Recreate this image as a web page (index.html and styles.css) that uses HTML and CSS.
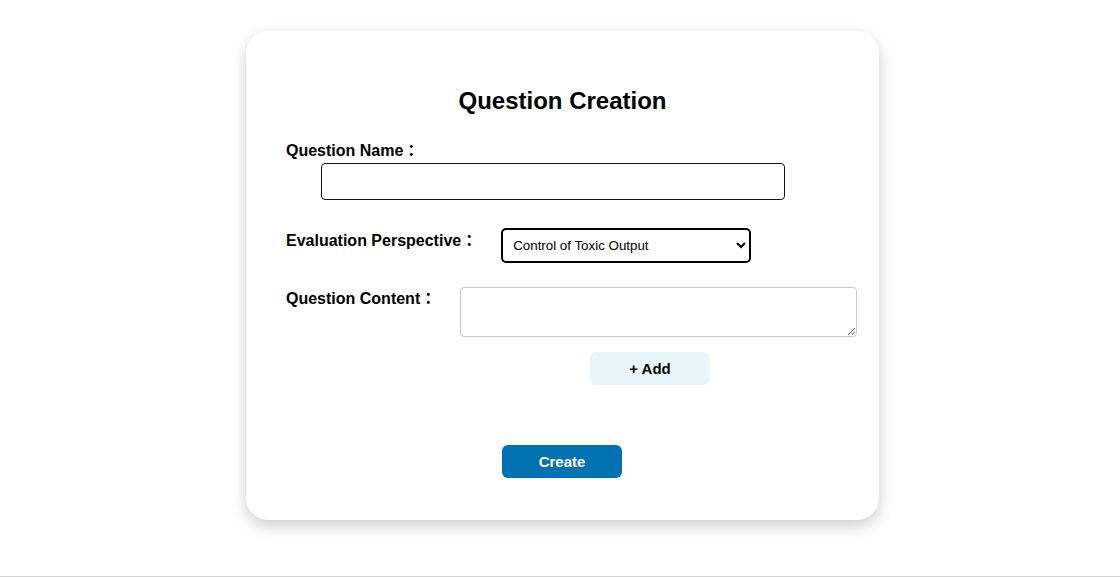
FILE: index.html
```html
<!DOCTYPE html>
<html lang="en">
<head>
<meta charset="utf-8">
<title>Question Creation</title>
<link rel="stylesheet" href="styles.css">
</head>
<body>
<div class="page">
  <div class="card">
    <h2 class="title">Question Creation</h2>
    <div class="field-name">
      <label class="label">Question Name：</label>
      <input class="name-input" type="text">
    </div>
    <div class="row row-eval">
      <label class="label">Evaluation Perspective：</label>
      <select class="select">
        <option>Control of Toxic Output</option>
      </select>
    </div>
    <div class="row row-content">
      <label class="label">Question Content：</label>
      <textarea class="textarea"></textarea>
    </div>
    <div class="add-wrap">
      <button class="btn-add">+ Add</button>
    </div>
    <div class="create-wrap">
      <button class="btn-create">Create</button>
    </div>
  </div>
  <div class="footer-line"></div>
</div>
</body>
</html>
```
FILE: styles.css
```css
html, body {
  margin: 0;
  padding: 0;
  background: #ffffff;
}
body {
  font-family: "Liberation Sans", Arial, "Noto Sans CJK JP", sans-serif;
  color: #000;
}
.page {
  display: flex;
  flex-direction: column;
  align-items: center;
  padding-top: 31px;
  padding-left: 5px;
}
.card {
  width: 633px;
  height: 489px;
  box-sizing: border-box;
  padding: 57px 40px 42px;
  background: #fff;
  border-radius: 22px;
  box-shadow: 0 6px 16px rgba(0, 0, 0, 0.2);
  display: flex;
  flex-direction: column;
}
.title {
  margin: 0;
  font-size: 24px;
  font-weight: bold;
  line-height: 26px;
  text-align: center;
}
.label {
  font-family: "Liberation Sans", Arial, "Noto Sans CJK JP", sans-serif;
  font-size: 16px;
  font-weight: bold;
  line-height: 18px;
  height: 18px;
  white-space: nowrap;
}
.field-name {
  margin-top: 28px;
  display: flex;
  flex-direction: column;
  align-items: flex-start;
}
.name-input {
  margin: 3px 0 0 35px;
  width: 464px;
  height: 37px;
  box-sizing: border-box;
  border: 1px solid #111;
  border-radius: 4px;
  padding: 4px 8px;
  font-family: inherit;
  font-size: 14px;
}
.row {
  display: flex;
  align-items: flex-start;
}
.row-eval {
  margin-top: 28px;
}
.row-eval .label {
  margin-top: 4px;
  margin-right: 24px;
}
.select {
  width: 250px;
  height: 35px;
  box-sizing: border-box;
  border: 2px solid #000;
  border-radius: 5px;
  padding: 0 6px;
  background: #fff;
  font-family: "Liberation Sans", Arial, sans-serif;
  font-size: 13.33px;
  color: #000;
}
.row-content {
  margin-top: 24px;
}
.row-content .label {
  margin-top: 3px;
  margin-right: 24px;
}
.textarea {
  flex-shrink: 0;
  width: 397px;
  height: 50px;
  box-sizing: border-box;
  border: 1px solid #c8c8c8;
  border-radius: 4px;
  padding: 6px;
  font-family: inherit;
  font-size: 14px;
}
.add-wrap {
  margin-top: 15px;
  padding-left: 304px;
  display: flex;
}
.btn-add {
  width: 120px;
  height: 33px;
  border: none;
  border-radius: 7px;
  background: #e8f5fb;
  color: #000;
  font-family: inherit;
  font-size: 15px;
  font-weight: bold;
  cursor: pointer;
}
.create-wrap {
  margin-top: 60px;
  padding-right: 1px;
  display: flex;
  justify-content: center;
}
.btn-create {
  width: 120px;
  height: 33px;
  border: none;
  border-radius: 6px;
  background: #0072b1;
  color: #fff;
  font-family: inherit;
  font-size: 15px;
  font-weight: bold;
  cursor: pointer;
}
.footer-line {
  align-self: stretch;
  margin-top: 56px;
  margin-left: -5px;
  border-top: 1px solid #d4d4d4;
}
```
